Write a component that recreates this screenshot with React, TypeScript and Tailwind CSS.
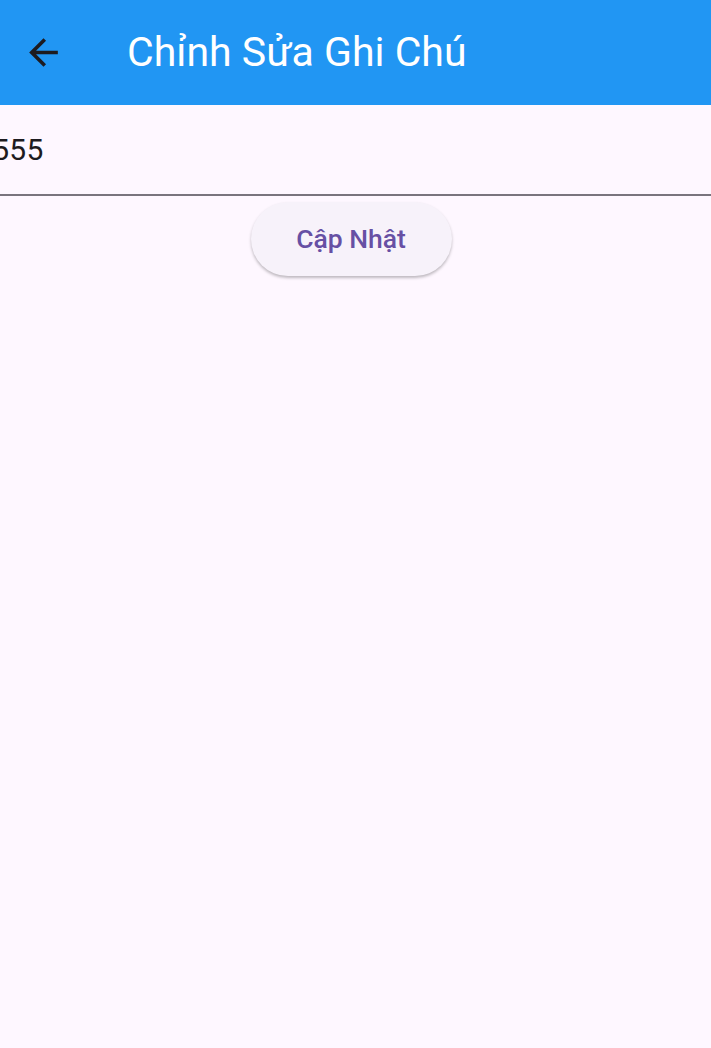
import React, { useState } from 'react';

function BackArrow() {
  return (
    <svg viewBox="0 0 24 24" className="w-[43px] h-[43px]" fill="#1d1b20">
      <path d="M20 11H7.83l5.59-5.59L12 4l-8 8 8 8 1.41-1.41L7.83 13H20v-2z" />
    </svg>
  );
}

export default function App() {
  const [note, setNote] = useState('5555');

  return (
    <div className="min-h-[1048px] bg-[#fef7ff] overflow-hidden" style={{ fontFamily: 'Roboto, "Noto Sans", sans-serif' }}>
      <header className="h-[105px] bg-[#2196f3] flex items-center">
        <button className="ml-[22px] w-[43px] h-[43px] flex items-center justify-center">
          <BackArrow />
        </button>
        <h1 className="ml-[62px] text-white text-[41px] leading-none tracking-normal">Chỉnh Sửa Ghi Chú</h1>
      </header>

      <div className="border-b-2 border-[#79747e] h-[91px] flex items-center">
        <input
          value={note}
          onChange={(e) => setNote(e.target.value)}
          className="ml-[-25px] w-full bg-transparent outline-none text-[#1d1b20] text-[30px] tracking-[0.3px]"
        />
      </div>

      <div className="flex justify-center pt-[6px]">
        <button className="mr-[9px] w-[201px] h-[74px] rounded-full bg-[#f7f2fa] text-[#6750a4] text-[26.5px] font-medium shadow-[0_2px_3px_rgba(0,0,0,0.25)]">
          Cập Nhật
        </button>
      </div>
    </div>
  );
}
